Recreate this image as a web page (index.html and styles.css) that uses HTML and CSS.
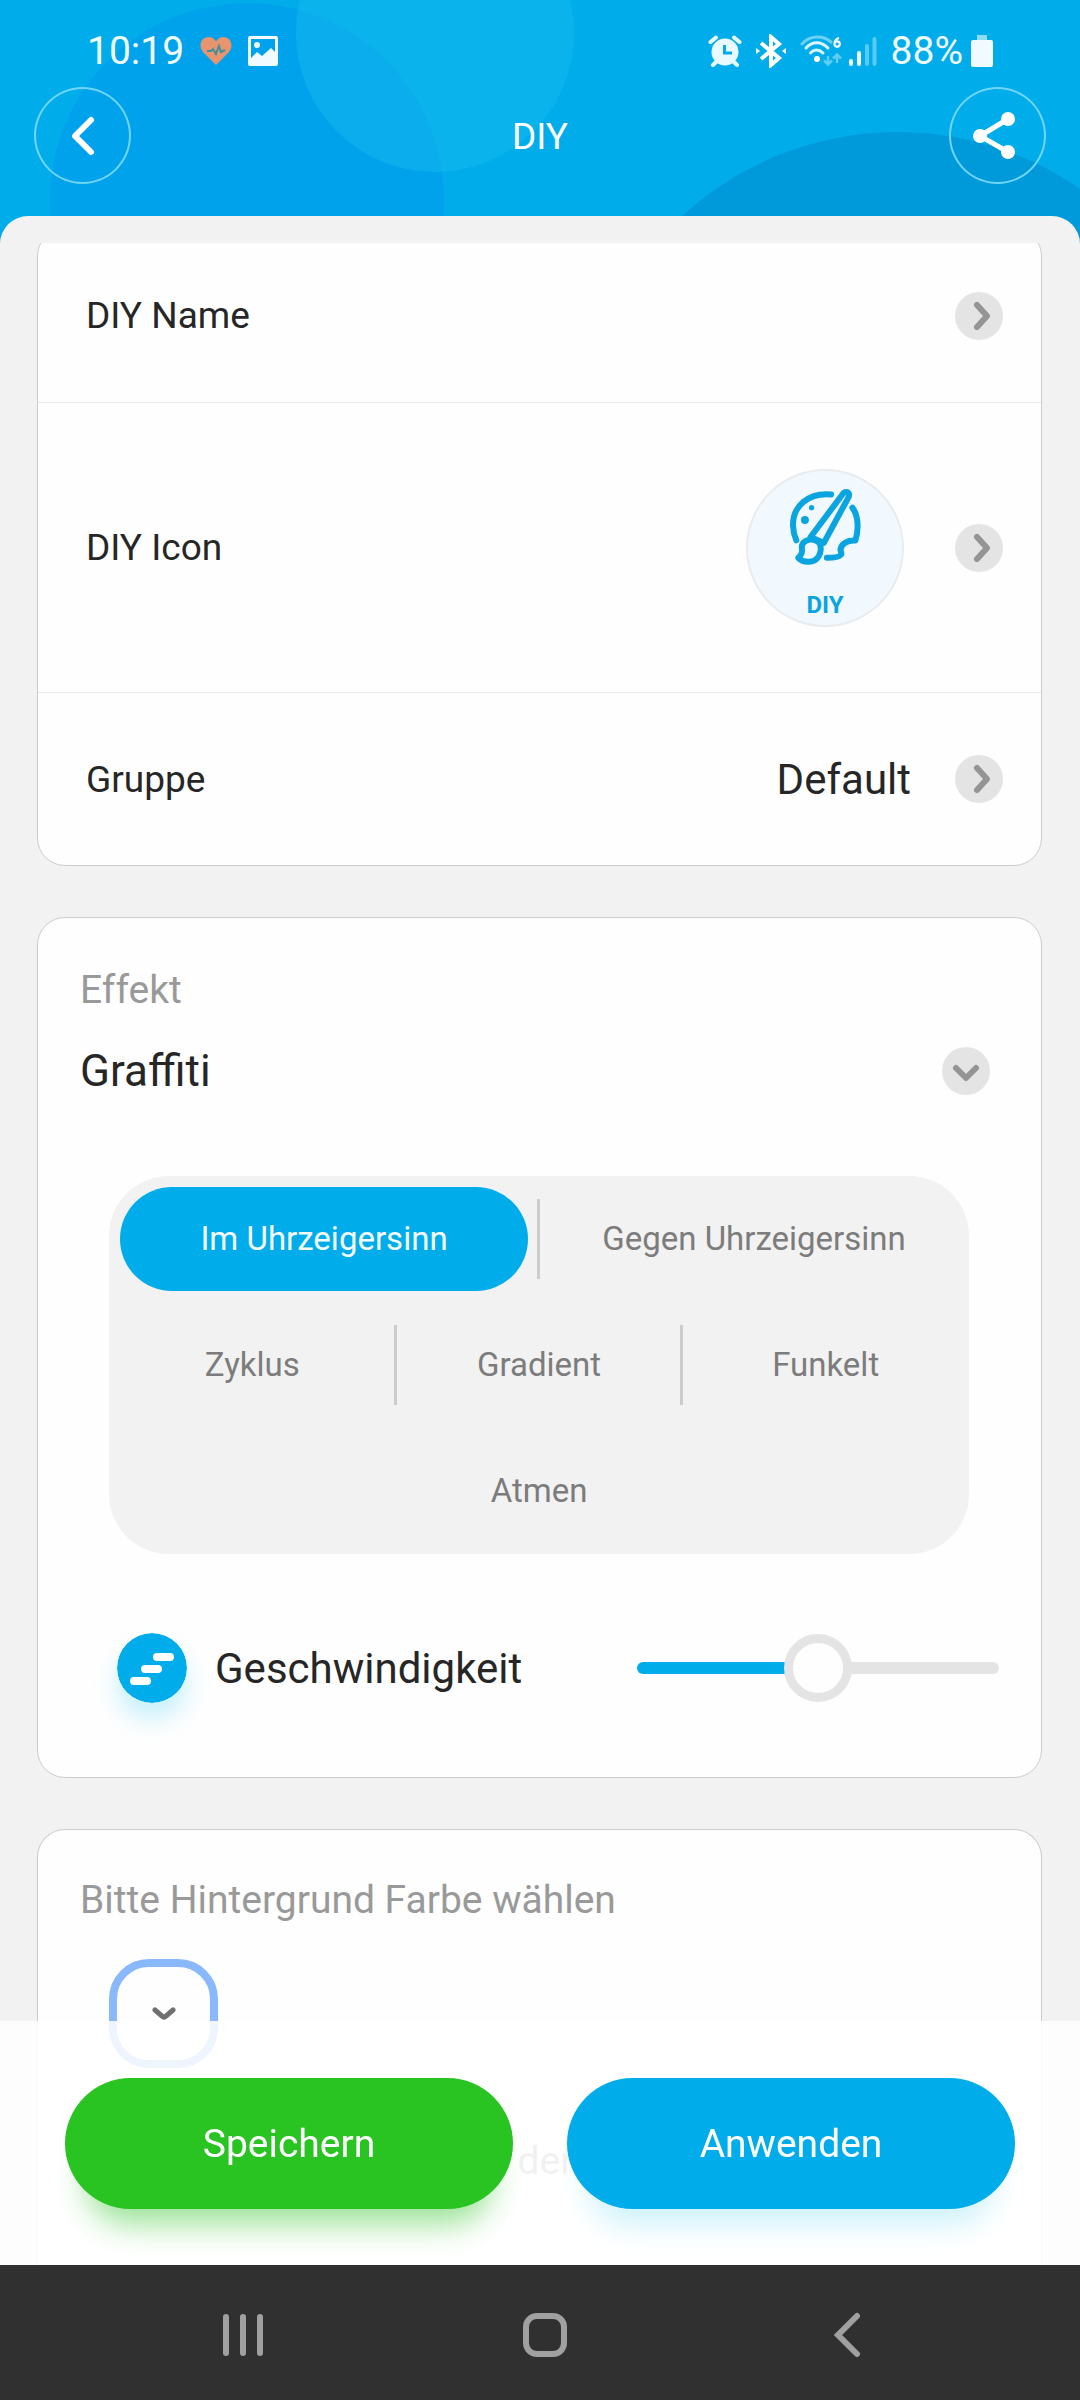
FILE: index.html
```html
<!DOCTYPE html>
<html lang="de">
<head>
  <meta charset="utf-8">
  <meta name="viewport" content="width=device-width, initial-scale=1">
  <title>DIY</title>
  <link rel="stylesheet" href="styles.css">
</head>
<body>
  <header class="top">
    <svg class="top-art" width="1080" height="250" viewBox="0 0 1080 250" preserveAspectRatio="xMidYMin slice" aria-hidden="true">
      <rect width="1080" height="250" fill="#00adea"/>
      <circle cx="247" cy="200" r="197" fill="#00a3eb"/>
      <circle cx="435" cy="33" r="139" fill="#1fc0f2" fill-opacity=".35"/>
      <circle cx="898" cy="452" r="320" fill="#0099d9"/>
    </svg>

    <div class="status">
      <div class="status-left">
        <span>10:19</span>
        <svg class="heart" width="32" height="28" viewBox="0 0 32 28" aria-hidden="true">
          <path d="M16 28 3 15C-2 9 1 0 8.500 0 12 0 14.500 2 16 4.500 17.500 2 20 0 23.500 0 31 0 34 9 29 15z" fill="#e8946f"/>
          <path d="M7 14h4l2-2 3 5 3-8 2 6 4-2" fill="none" stroke="#3f8f9c" stroke-width="2"/>
        </svg>
        <svg width="30" height="30" viewBox="0 0 30 30" aria-hidden="true">
          <path fill="#f0faff" fill-rule="evenodd" d="M2 0h26a2 2 0 0 1 2 2v26a2 2 0 0 1-2 2H2a2 2 0 0 1-2-2V2a2 2 0 0 1 2-2zm1 3v19l6-6 5 4 9-8 4 4V3z"/>
          <circle cx="9" cy="9" r="3" fill="#f0faff"/>
        </svg>
      </div>
      <div class="status-right">
        <svg width="34" height="32" viewBox="0 0 34 32" aria-hidden="true">
          <g fill="none" stroke="#e8faff" stroke-width="4" stroke-linecap="round"><path d="M2.500 7 8 2.500M31.500 7 26 2.500M8 27l-3 3M26 27l3 3"/></g>
          <circle cx="17" cy="17" r="13.500" fill="#e8faff"/>
          <path d="M16.500 10v8H24" fill="none" stroke="#00adea" stroke-width="3"/>
        </svg>
        <svg width="30" height="34" viewBox="0 0 30 34" aria-hidden="true">
          <path d="M5 9l18 15-8 7V3l8 7L5 25" fill="none" stroke="#fff" stroke-width="4"/>
          <path d="M0 14l4 3-4 3zM30 14l-4 3 4 3z" fill="#fff"/>
        </svg>
        <svg class="wifi" width="42" height="32" viewBox="0 0 42 32" aria-hidden="true">
          <g fill="none" stroke="#d9f5ff" stroke-width="3" stroke-linecap="round">
            <path d="M2 9C10 0 23 0 31 7" stroke-opacity=".5"/>
            <path d="M6 13C12 6 21 6 28 13"/><path d="M10.500 18C14 14 19 14 23 18"/>
          </g>
          <circle cx="17" cy="24" r="3" fill="#fff"/>
          <path d="M28 21v8m-4-3.500 4 4 4-4M37 28v-8m-4 3.500 4-4 4 4" fill="none" stroke="#5fcdf5" stroke-width="2.500"/>
          <path d="M39 3c-4 1-4.500 4-4.500 6.500a2.700 2.700 0 1 0 0-1" fill="none" stroke="#fff" stroke-width="2.200"/>
        </svg>
        <svg width="28" height="30" viewBox="0 0 28 30" aria-hidden="true">
          <g fill="none" stroke-width="4" stroke-linecap="round"><path d="M2 25v3M10 17v11" stroke="#f0fbff"/><path d="M18 10v18M25.500 3v25" stroke="#59caf3"/></g>
        </svg>
        <span class="percent">88%</span>
        <svg width="22" height="32" viewBox="0 0 22 32" aria-hidden="true">
          <path d="M6 0h10v5H6z" fill="#8fdcf8"/><rect y="5" width="22" height="27" rx="2" fill="#f0faff"/>
        </svg>
      </div>
    </div>

    <div class="title-bar">
      <button class="round-btn" type="button" aria-label="Zurück">
        <svg width="97" height="97" viewBox="0 0 97 97" aria-hidden="true"><path d="M57 33 41 49l16 16" fill="none" stroke="#fff" stroke-width="6" stroke-linecap="round" stroke-linejoin="round"/></svg>
      </button>
      <h1 class="title">DIY</h1>
      <button class="round-btn" type="button" aria-label="Teilen">
        <svg width="97" height="97" viewBox="0 0 97 97" aria-hidden="true"><path d="M59 32 31 49l28 16" fill="none" stroke="#fff" stroke-width="5"/><g fill="#fff"><circle cx="31" cy="49" r="7"/><circle cx="59" cy="32" r="7"/><circle cx="59" cy="65" r="7"/></g></svg>
      </button>
    </div>
  </header>

  <main class="sheet">
    <div class="scroll">
      <section class="card rows">
        <button class="row" type="button">
          <span class="row-label">DIY Name</span>
          <svg class="go" width="48" height="48" viewBox="0 0 48 48" aria-hidden="true"><circle cx="24" cy="24" r="24"/><path d="M22 13l10 11-10 11"/></svg>
        </button>
        <button class="row row-tall" type="button">
          <span class="row-label">DIY Icon</span>
          <span class="badge">
            <svg width="73" height="80" viewBox="146 82 220 240" aria-hidden="true">
              <g fill="none" stroke="#0aa5e0" stroke-width="18" stroke-linecap="round" stroke-linejoin="round">
                <path d="M273 104C205 98 157 138 158 198q1 24 10 44"/>
                <path d="M337 144C355 166 357 208 346 243 324 241 303 252 301 270q2 8 3 14c-6 10-26 11-44 11"/>
                <path d="M211 232 307 104c8-13 25-8 19 7L251 250z"/>
                <path d="M211 240c-20 2-29 14-26 29 3 13-4 19-11 26 15 16 49 17 61-4 9-14 9-26 3-41-8-7-17-11-27-10z"/>
              </g>
              <g fill="#0aa5e0"><circle cx="194" cy="181" r="12"/><circle cx="214" cy="144" r="8"/></g>
            </svg>
            <span class="badge-text">DIY</span>
          </span>
          <svg class="go" width="48" height="48" viewBox="0 0 48 48" aria-hidden="true"><circle cx="24" cy="24" r="24"/><path d="M22 13l10 11-10 11"/></svg>
        </button>
        <button class="row" type="button">
          <span class="row-label">Gruppe</span>
          <span class="row-value">Default</span>
          <svg class="go" width="48" height="48" viewBox="0 0 48 48" aria-hidden="true"><circle cx="24" cy="24" r="24"/><path d="M22 13l10 11-10 11"/></svg>
        </button>
      </section>

      <section class="card effect">
        <label class="heading" for="effect">Effekt</label>
        <div class="select-wrap">
          <select id="effect" class="select"><option>Graffiti</option></select>
          <svg class="go" width="48" height="48" viewBox="0 0 48 48" aria-hidden="true"><circle cx="24" cy="24" r="24"/><path d="M14 21l10 10 10-10"/></svg>
        </div>

        <div class="modes" role="radiogroup" aria-label="Effekt">
          <div class="mode-row">
            <label class="mode"><input type="radio" name="mode" checked><span>Im Uhrzeigersinn</span></label>
            <label class="mode"><input type="radio" name="mode"><span>Gegen Uhrzeigersinn</span></label>
          </div>
          <div class="mode-row">
            <label class="mode"><input type="radio" name="mode"><span>Zyklus</span></label>
            <label class="mode"><input type="radio" name="mode"><span>Gradient</span></label>
            <label class="mode"><input type="radio" name="mode"><span>Funkelt</span></label>
          </div>
          <div class="mode-row">
            <label class="mode"><input type="radio" name="mode"><span>Atmen</span></label>
          </div>
        </div>

        <div class="speed">
          <svg class="speed-icon" width="70" height="70" viewBox="0 0 70 70" aria-hidden="true">
            <circle cx="35" cy="35" r="35" fill="#00adea"/>
            <g fill="#fff"><rect x="36" y="20" width="21" height="8" rx="4"/><rect x="24" y="32" width="21" height="8" rx="4"/><rect x="13" y="44" width="21" height="8" rx="4"/></g>
          </svg>
          <label class="speed-label" for="speed">Geschwindigkeit</label>
          <input id="speed" class="slider" type="range" min="0" max="100" value="50">
        </div>
      </section>

      <section class="card colors">
        <h2 class="heading">Bitte Hintergrund Farbe wählen</h2>
        <button class="swatch" type="button" aria-label="Hintergrund Farbe">
          <svg width="24" height="16" viewBox="0 0 24 16" aria-hidden="true"><path d="M3 4l7 6q2 2 4 0l7-6" fill="none" stroke="#707070" stroke-width="5" stroke-linecap="round"/></svg>
        </button>
        <p class="heading hint">der</p>
      </section>
    </div>
  </main>

  <footer class="bottom">
    <div class="actions">
      <button class="action save" type="button">Speichern</button>
      <button class="action apply" type="button">Anwenden</button>
    </div>
    <nav class="system">
      <button type="button" aria-label="Letzte Apps"><svg width="46" height="46" viewBox="0 0 46 46" aria-hidden="true"><path d="M6 5v36M23 5v36M40 5v36"/></svg></button>
      <button type="button" aria-label="Startseite"><svg width="46" height="46" viewBox="0 0 46 46" aria-hidden="true"><rect x="4" y="4" width="38" height="38" rx="11"/></svg></button>
      <button type="button" aria-label="Zurück"><svg width="46" height="46" viewBox="0 0 46 46" aria-hidden="true"><path d="M33 4 14 23l19 19"/></svg></button>
    </nav>
  </footer>
</body>
</html>
```
FILE: styles.css
```css
* { box-sizing: border-box; }

body {
  margin: 0;
  min-height: 100vh;
  display: flex;
  flex-direction: column;
  background: #00adea;
  color: #262626;
  font-family: Roboto, "Liberation Sans", sans-serif;
}

button {
  margin: 0;
  padding: 0;
  border: 0;
  background: none;
  color: inherit;
  font: inherit;
}

svg { display: block; flex: none; }

/* Header */
.top {
  position: relative;
  height: 216px;
  padding-top: 33px;
  color: #fff;
}
.top-art {
  position: absolute;
  top: 0;
  left: 0;
  width: 100%;
}
.status {
  position: relative;
  display: flex;
  justify-content: space-between;
  align-items: center;
  height: 36px;
  padding: 0 87px;
  font-size: 39px;
  line-height: 38px;
  color: #f0fbff;
}
.status-left, .status-right { display: flex; align-items: center; }
.status-left { gap: 16px; }
.status-right { gap: 14px; }
.percent { margin-right: -6px; }
.wifi { margin-right: -7px; }
.title-bar {
  position: relative;
  display: flex;
  justify-content: space-between;
  align-items: center;
  margin-top: 18px;
  padding: 0 34px;
}
.round-btn {
  width: 97px;
  height: 97px;
  border-radius: 50%;
  box-shadow: inset 0 0 0 2px #6fd6f7;
}
.title {
  margin: 0;
  padding-top: 2px;
  font-size: 37px;
  font-weight: 400;
}

/* Sheet */
.sheet {
  position: relative;
  flex: 1;
  display: flex;
  flex-direction: column;
  padding: 27px 38px 135px 37px;
  border-radius: 28px 28px 0 0;
  background: #f2f2f2;
}
.scroll {
  flex: 1;
  display: flex;
  flex-direction: column;
  gap: 51px;
  overflow: hidden;
}
.card {
  border: 1px solid #ccc;
  border-radius: 28px;
  background: #fefefe;
}

/* Setting rows */
.rows { margin-top: -15px; }
.row {
  display: flex;
  align-items: center;
  width: 100%;
  height: 173px;
  padding: 0 38px 0 48px;
  text-align: left;
}
.row + .row { border-top: 1px solid #e8e8e8; }
.row-tall { height: 290px; }
.row-label { flex: 1; font-size: 37px; }
.row-value { margin-right: 44px; font-size: 42px; }
.badge {
  display: flex;
  flex-direction: column;
  align-items: center;
  gap: 24px;
  width: 158px;
  height: 158px;
  margin-right: 51px;
  padding-top: 16px;
  border: 2px solid #e9ecef;
  border-radius: 50%;
  background: #f1f8fe;
}
.badge-text {
  color: #0aa5e0;
  font-size: 24px;
  font-weight: 700;
  line-height: 28px;
}
.go circle { fill: #e4e4e4; }
.go path {
  fill: none;
  stroke: #949494;
  stroke-width: 6;
  stroke-linecap: round;
  stroke-linejoin: round;
}

/* Effect */
.effect { padding: 49px 42px 74px; }
.heading {
  display: block;
  margin: 0;
  color: #999;
  font-size: 39px;
  font-weight: 400;
  line-height: 46px;
}
.select-wrap {
  display: grid;
  grid-template-columns: 1fr;
  margin-top: 34px;
  padding-right: 9px;
}
.select-wrap > * { grid-area: 1 / 1; }
.select-wrap .go { justify-self: end; pointer-events: none; }
.select {
  appearance: none;
  height: 48px;
  padding: 0;
  border: 0;
  background: none;
  color: #262626;
  font: 400 44px/48px Roboto, "Liberation Sans", sans-serif;
}
.modes {
  margin: 81px 30px 0 29px;
  border-radius: 60px;
  background: #f2f2f2;
}
.mode-row { display: flex; height: 126px; }
.mode {
  position: relative;
  flex: 1;
  display: flex;
  padding: 11px 11px;
}
.mode + .mode::before {
  content: "";
  position: absolute;
  left: -2px;
  top: 23px;
  width: 3px;
  height: 80px;
  background: #ccc;
}
.mode input {
  position: absolute;
  margin: 0;
  opacity: 0;
}
.mode span {
  flex: 1;
  border-radius: 52px;
  color: #7c7c7c;
  font-size: 33px;
  line-height: 104px;
  text-align: center;
}
.mode input:checked + span { background: #00adea; color: #f4fcff; }

.speed {
  display: flex;
  align-items: center;
  margin-top: 79px;
  padding-left: 37px;
}
.speed-icon {
  border-radius: 50%;
  box-shadow: 0 16px 24px rgba(0, 190, 240, .22);
}
.speed-label { flex: 1; padding-left: 28px; font-size: 42px; }
.slider {
  appearance: none;
  width: 41%;
  height: 68px;
  margin: 0;
  background: none;
}
.slider::-webkit-slider-runnable-track {
  height: 12px;
  border-radius: 6px;
  background: linear-gradient(to right, #00adea 50%, #e4e4e4 50%);
}
.slider::-webkit-slider-thumb {
  appearance: none;
  width: 68px;
  height: 68px;
  margin-top: -28px;
  border: 9px solid #e4e4e4;
  border-radius: 50%;
  background: #fefefe;
}

/* Background colours */
.colors {
  flex: 1;
  padding: 47px 42px 0;
  border-bottom: 0;
  border-radius: 28px 28px 0 0;
}
.swatch {
  display: flex;
  justify-content: center;
  align-items: center;
  width: 109px;
  height: 109px;
  margin: 36px 0 0 29px;
  border: 8px solid #8ab8fc;
  border-radius: 40px;
}
.hint { margin-top: 70px; padding-left: 12px; text-align: center; }

/* Bottom bars */
.bottom {
  position: fixed;
  left: 0;
  right: 0;
  bottom: 0;
}
.actions {
  display: flex;
  gap: 54px;
  padding: 57px 65px 56px;
  background: rgba(255, 255, 255, .86);
}
.action {
  flex: 1;
  height: 131px;
  border-radius: 66px;
  color: #fff;
  font-size: 39px;
}
.save {
  background: #29c322;
  box-shadow: 0 36px 30px -20px rgba(41, 195, 34, .45);
}
.apply {
  background: #00adea;
  box-shadow: 0 36px 30px -20px rgba(0, 190, 234, .2);
}
.system {
  position: relative;
  display: flex;
  height: 135px;
  padding: 4px 82px 0 92px;
  background: #303030;
}
.system button {
  flex: 1;
  display: flex;
  justify-content: center;
  align-items: center;
}
.system svg {
  fill: none;
  stroke: #a0a0a0;
  stroke-width: 6;
  stroke-linecap: round;
}
```
